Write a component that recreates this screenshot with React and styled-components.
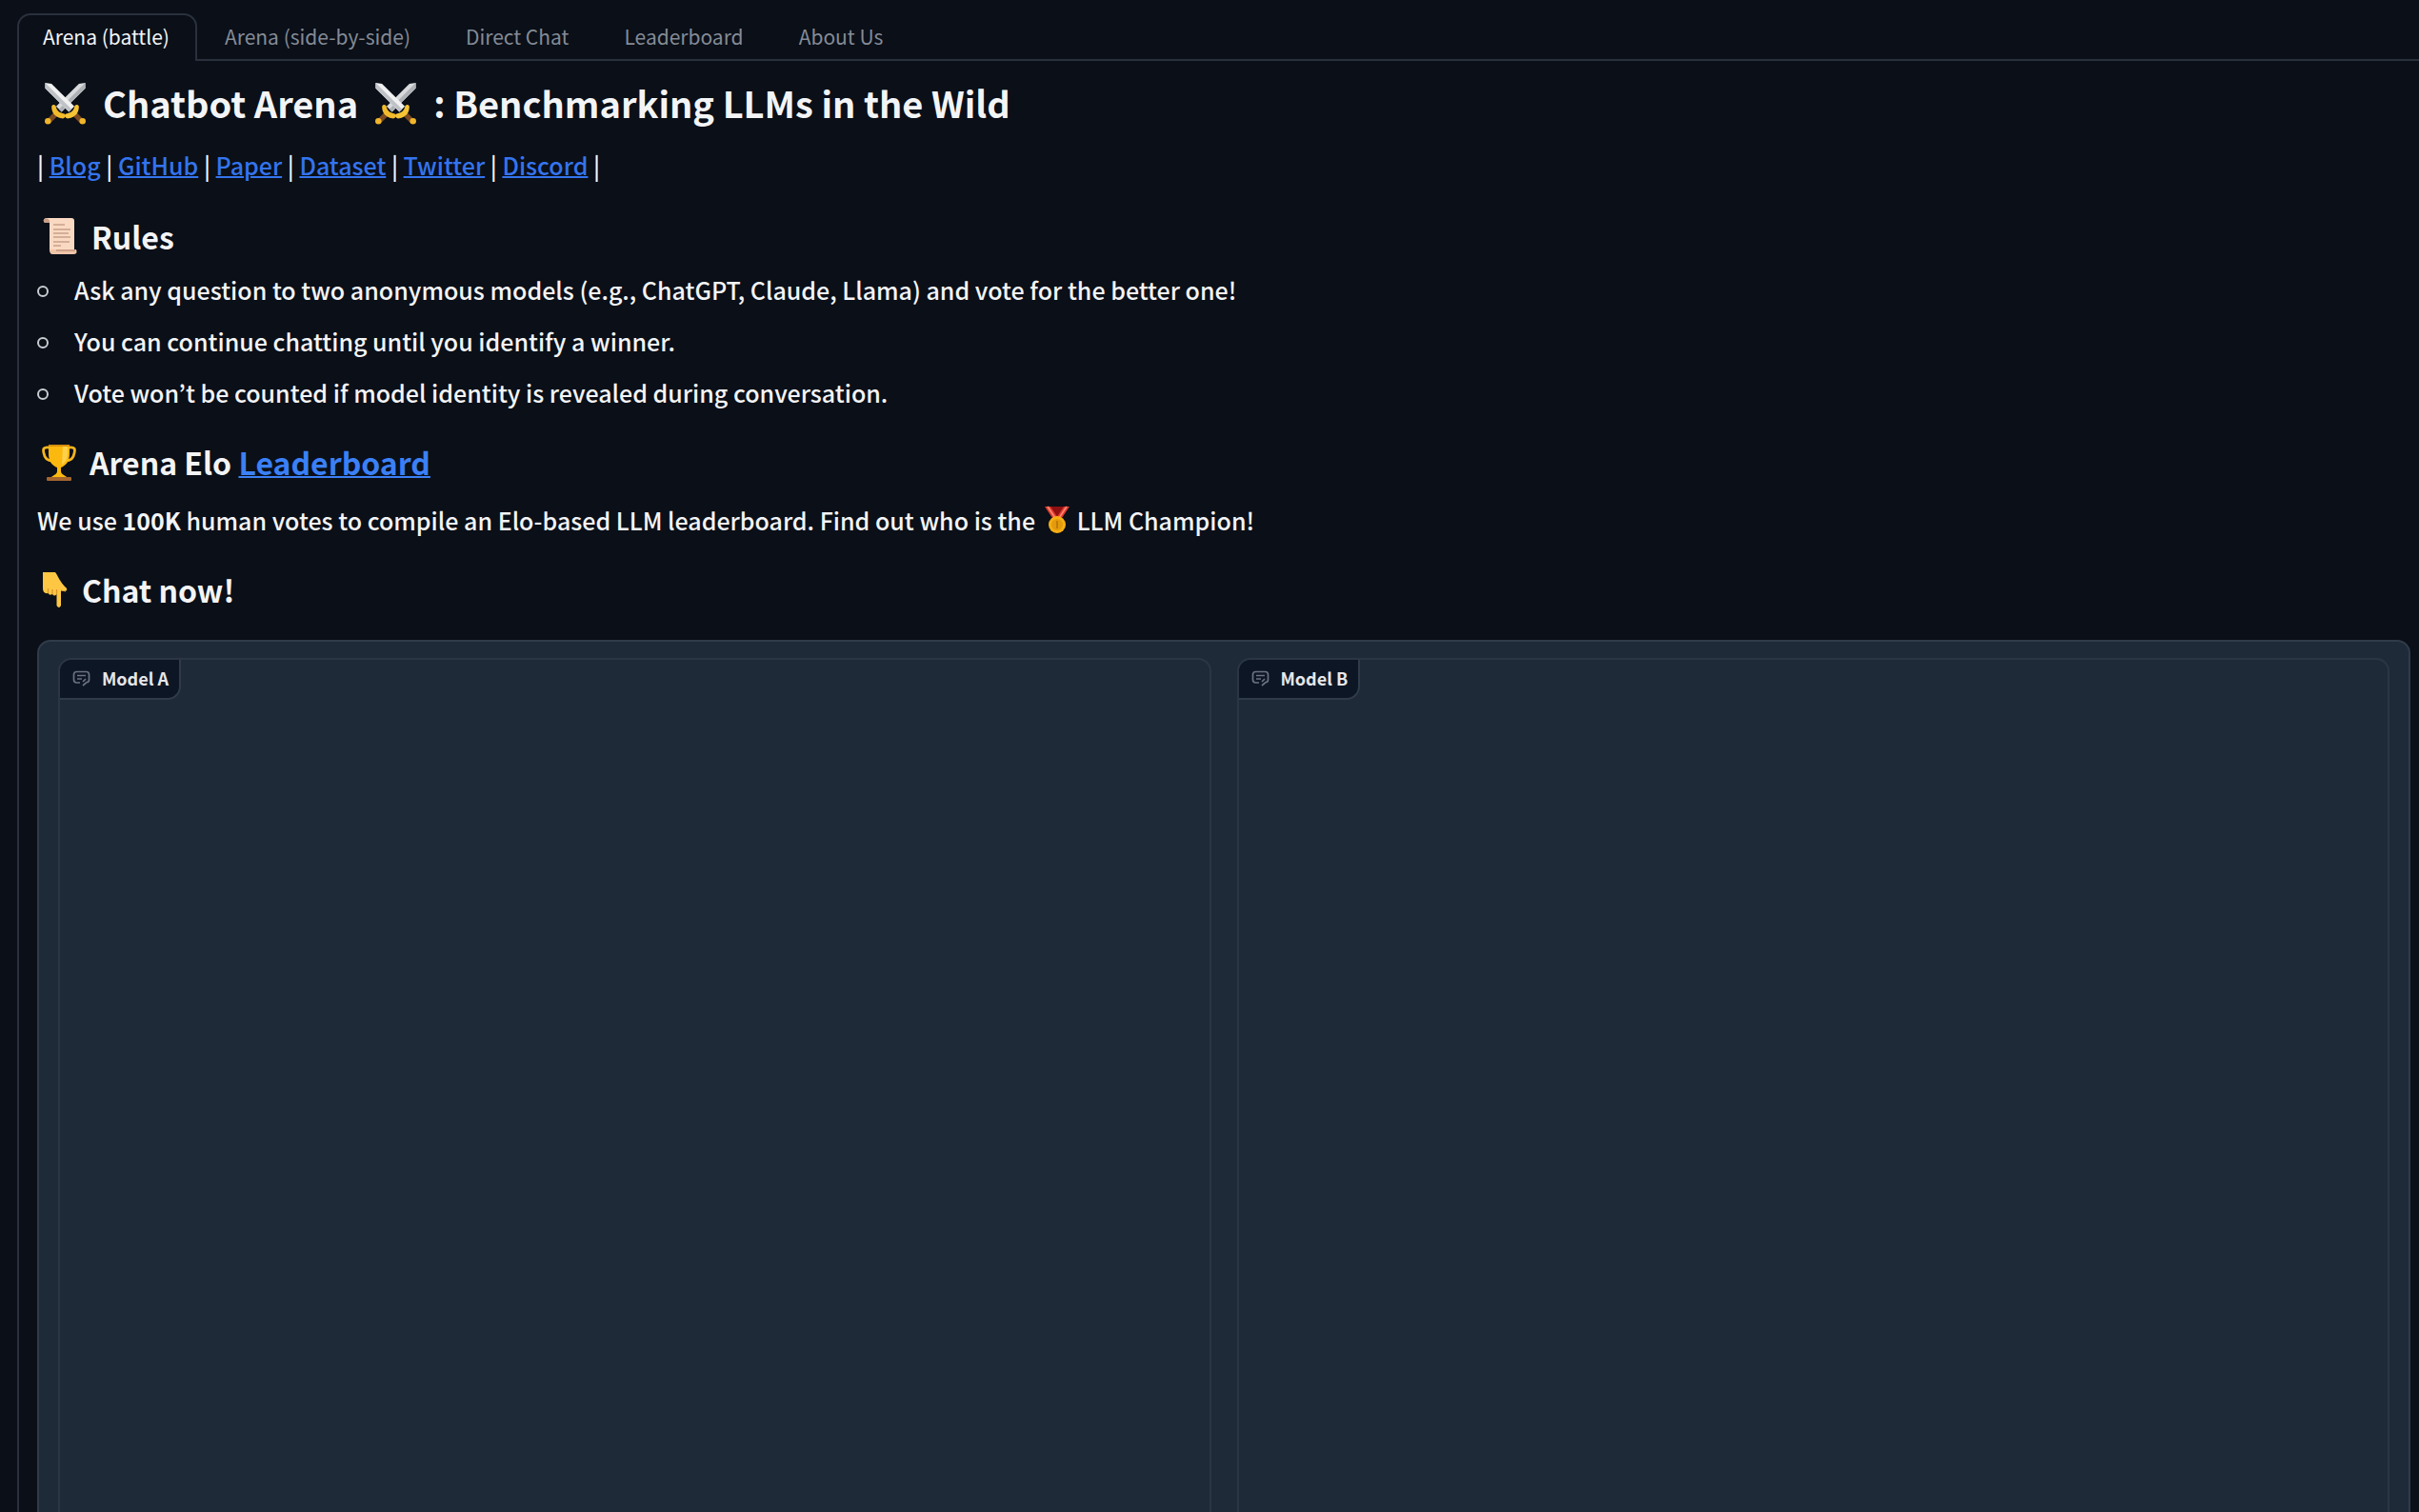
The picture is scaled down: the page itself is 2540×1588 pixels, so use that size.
import React, { useState } from "react";
import styled, { createGlobalStyle } from "styled-components";

const GlobalStyle = createGlobalStyle`
  *, *::before, *::after { box-sizing: border-box; }
  body {
    margin: 0;
    background: #0a0f18;
    color: #f3f4f6;
    font-family: "Noto Sans CJK KR", "Noto Sans", sans-serif;
    font-size: 25px;
    font-weight: 500;
    line-height: 38px;
  }
  h1, h2, p, ul { margin: 0; padding: 0; }
`;

const Page = styled.main`
  height: 100vh;
  overflow: hidden;
  padding: 14px 0 0 18px;
`;

const Tabs = styled.nav`
  display: flex;
  gap: 2px;
  border-bottom: 2px solid #2a313c;
`;

const Tab = styled.button`
  height: 50px;
  margin-bottom: -2px;
  padding: 0 27px 4px 25px;
  border: 2px solid ${(p) => (p.$active ? "#2a313c" : "transparent")};
  border-bottom: 0;
  border-radius: 14px 14px 0 0;
  background: ${(p) => (p.$active ? "#0a0f18" : "transparent")};
  color: ${(p) => (p.$active ? "#f3f4f6" : "#848b96")};
  font: inherit;
  font-size: 21px;
  font-weight: 400;
  line-height: 30px;
  white-space: nowrap;
  cursor: pointer;
`;

const TabPanel = styled.section`
  padding: 14px 9px 0 19px;
  border-left: 2px solid #2a313c;
`;

const Title = styled.h1`
  display: flex;
  align-items: center;
  gap: 17px;
  padding-left: 7px;
  font-size: 38px;
  line-height: 60px;
  font-weight: 600;
  white-space: nowrap;
`;

const Link = styled.a`
  color: #3474ee;
  text-decoration: underline;
  text-decoration-thickness: 2px;
`;

const Links = styled.p`
  margin-top: 16px;
`;

const Heading = styled.h2`
  display: flex;
  align-items: center;
  gap: 14px;
  margin-top: ${(p) => p.$space}px;
  padding-left: 5px;
  font-size: 32px;
  line-height: 48px;
  font-weight: 600;

  ${Link} { color: #3b80f6; }
`;

const Rules = styled.ul`
  display: flex;
  flex-direction: column;
  gap: 16px;
  margin-top: 13px;
  list-style: none;
`;

const Rule = styled.li`
  display: flex;
  align-items: center;
  gap: 27px;

  &::before {
    content: "";
    width: 12px;
    height: 12px;
    margin-top: 4px;
    border: 2px solid #c9ccd1;
    border-radius: 50%;
  }
`;

const Note = styled.p`
  margin-top: 18px;
`;

const Battle = styled.div`
  display: grid;
  grid-template-columns: 1fr 1fr;
  gap: 27px;
  height: 1100px;
  margin-top: 29px;
  padding: 17px 20px;
  border: 2px solid #303b49;
  border-radius: 14px;
  background: #1f2a38;
`;

const ChatBox = styled.section`
  display: flex;
  align-items: flex-start;
  border: 2px solid #2b3644;
  border-radius: 14px;
  overflow: hidden;
`;

const ChatLabel = styled.h3`
  display: flex;
  align-items: center;
  gap: 12px;
  height: 42px;
  margin: 0;
  padding: 0 11px 2px 13px;
  border: solid #303b49;
  border-width: 0 2px 2px 0;
  border-radius: 0 0 14px 0;
  background: #0d1625;
  color: #e5e7eb;
  font-size: 18px;
  line-height: 28px;
  font-weight: 600;
`;

const Emoji = styled.svg`
  flex: none;
  width: ${(p) => p.$w}px;
  height: ${(p) => p.$h}px;
`;

const InlineEmoji = styled(Emoji)`
  margin: 0 8px 0 4px;
  vertical-align: -3px;
`;

function Swords() {
  return (
    <Emoji $w={45} $h={45} viewBox="0 0 46 47" role="img" aria-label="Crossed swords">
      <g>
        <path d="M45 1 L45 7 L19 33 L13 27 L38 2 Z" fill="#d9dadc" />
        <path d="M45 1 L45 7 L19 33 L16 30 Z" fill="#aeb1b5" />
        <path d="M12 32 L16 36 L6 46 L2 42 Z" fill="#7a4a22" />
        <path d="M8 27 C9 24 13 25 13 28 C14 32 17 34 22 35 C25 36 23 41 19 40 C12 39 8 34 8 27 Z" fill="#f2bb2b" />
        <circle cx="4" cy="43" r="3.4" fill="#f0b52a" />
      </g>
      <g transform="translate(46 0) scale(-1 1)">
        <path d="M45 1 L45 7 L19 33 L13 27 L38 2 Z" fill="#f1f1f2" />
        <path d="M45 1 L45 7 L19 33 L16 30 Z" fill="#bfc2c6" />
        <path d="M12 32 L16 36 L6 46 L2 42 Z" fill="#7a4a22" />
        <path d="M8 27 C9 24 13 25 13 28 C14 32 17 34 22 35 C25 36 23 41 19 40 C12 39 8 34 8 27 Z" fill="#f6c434" />
        <circle cx="4" cy="43" r="3.4" fill="#f0b52a" />
      </g>
    </Emoji>
  );
}

function Scroll() {
  return (
    <Emoji $w={38} $h={40} viewBox="0 0 38 40" role="img" aria-label="Scroll">
      <path d="M4 1 H31 Q34 1 34 4 V36 H8 V6 H3 Q0 3 4 1 Z" fill="#f9d9c2" />
      <path d="M4 1 Q0 3 3 6 H8 Q9 2 4 1 Z" fill="#c99f87" />
      <path d="M8 34 H36 Q38 39 33 39 H11 Q8 39 8 34 Z" fill="#efc5aa" />
      <path d="M15 35 H35" stroke="#b98a70" strokeWidth="1.2" />
      <path d="M12 8 H24 M12 13 H30 M12 17 H28 M12 21 H30 M12 26 H29 M12 30 H20" stroke="#c9a08a" strokeWidth="1.3" />
    </Emoji>
  );
}

function Trophy() {
  return (
    <Emoji $w={36} $h={39} viewBox="0 0 36 39" role="img" aria-label="Trophy">
      <path d="M8 4 C1 3 1 6 2 10 C3 16 7 18 11 18 M28 4 C35 3 35 6 34 10 C33 16 29 18 25 18" fill="none" stroke="#f5b51c" strokeWidth="2.8" />
      <path d="M7 1 H29 V10 C29 19 25 23 20 25 V29 C20 32 24 33 26 35 H10 C12 33 16 32 16 29 V25 C11 23 7 19 7 10 Z" fill="#fbb90f" />
      <path d="M22 2 H27 V10 C27 17 24 20 21 22 Z" fill="#ffd04a" />
      <path d="M7 1 H29 V3 H7 Z" fill="#d98f0c" />
      <rect x="5" y="35" width="26" height="4" rx="1" fill="#a5662f" />
    </Emoji>
  );
}

function PointDown() {
  return (
    <Emoji $w={28} $h={39} viewBox="0 0 28 39" role="img" aria-label="Backhand pointing down">
      <path d="M1 1 H14 C17 5 19 11 24 16 Q27 18 26 20 Q24 22 20 20 V36 Q18 40 15.5 36 V24 Q13 27 11 24 Q8 26 6.5 23 Q1 24 1 18 Z" fill="#fdc744" />
      <path d="M6.5 23 V18 M11 24 V19 M15.5 24 V19" stroke="#d9962c" strokeWidth="1.3" fill="none" />
      <path d="M20 20 L25 21" stroke="#e0a032" strokeWidth="1" fill="none" />
    </Emoji>
  );
}

function Medal() {
  return (
    <InlineEmoji $w={26} $h={29} viewBox="0 0 26 29" role="img" aria-label="Gold medal">
      <path d="M6 1 H20 L15 13 H11 Z" fill="#8f1010" />
      <path d="M0 1 H6 L14 13 H8 Z M26 1 H20 L12 13 H18 Z" fill="#e0392c" />
      <path d="M3 1 L11 13 M23 1 L15 13" stroke="#ff8a78" strokeWidth="1.5" />
      <circle cx="13" cy="20" r="9" fill="#f6ae12" />
      <circle cx="13" cy="20" r="6" fill="#e39a0c" />
      <path d="M13 16 V24" stroke="#b87408" strokeWidth="1.6" />
    </InlineEmoji>
  );
}

function ChatIcon() {
  return (
    <Emoji $w={19} $h={17} viewBox="0 0 19 17" fill="none" stroke="#6b7280" strokeWidth="1.7" aria-hidden="true">
      <path d="M8 13 H4.5 Q1.5 13 1.5 10 V4.5 Q1.5 1.5 4.5 1.5 H14.5 Q17.5 1.5 17.5 4.5 V10 Q17.5 12.5 15 12.5 L11 16" />
      <path d="M5 5.5 H14 M5 9 H10 M14 9 L11 12" />
    </Emoji>
  );
}

const tabs = ["Arena (battle)", "Arena (side-by-side)", "Direct Chat", "Leaderboard", "About Us"];
const links = ["Blog", "GitHub", "Paper", "Dataset", "Twitter", "Discord"];
const rules = [
  "Ask any question to two anonymous models (e.g., ChatGPT, Claude, Llama) and vote for the better one!",
  "You can continue chatting until you identify a winner.",
  "Vote won’t be counted if model identity is revealed during conversation.",
];

export default function App() {
  const [active, setActive] = useState(0);
  return (
    <Page>
      <GlobalStyle />
      <Tabs>
        {tabs.map((name, i) => (
          <Tab key={name} type="button" $active={i === active} onClick={() => setActive(i)}>
            {name}
          </Tab>
        ))}
      </Tabs>
      <TabPanel>
        <Title>
          <Swords />
          <span>Chatbot Arena</span>
          <Swords />
          <span>: Benchmarking LLMs in the Wild</span>
        </Title>
        <Links>
          {"| "}
          {links.map((name) => (
            <React.Fragment key={name}>
              <Link href={"#" + name.toLowerCase()}>{name}</Link>
              {" | "}
            </React.Fragment>
          ))}
        </Links>
        <Heading $space={32}>
          <Scroll />
          <span>Rules</span>
        </Heading>
        <Rules>
          {rules.map((text) => (
            <Rule key={text}>{text}</Rule>
          ))}
        </Rules>
        <Heading $space={30}>
          <Trophy />
          <span>
            Arena Elo <Link href="#leaderboard">Leaderboard</Link>
          </span>
        </Heading>
        <Note>
          We use <strong>100K</strong> human votes to compile an Elo-based LLM leaderboard. Find out who is the <Medal />
          LLM Champion!
        </Note>
        <Heading $space={30}>
          <PointDown />
          <span>Chat now!</span>
        </Heading>
        <Battle>
          {["Model A", "Model B"].map((name) => (
            <ChatBox key={name}>
              <ChatLabel>
                <ChatIcon />
                {name}
              </ChatLabel>
            </ChatBox>
          ))}
        </Battle>
      </TabPanel>
    </Page>
  );
}
